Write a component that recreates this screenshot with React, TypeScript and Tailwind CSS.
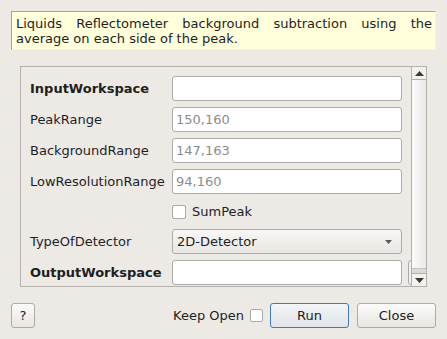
export default function App() {
  const inputBox = "h-[25px] w-[230px] shrink-0 rounded-[3px] border border-[#ababab] bg-white px-[3px] flex items-center text-[#8c8c8c]";
  return (
    <div className="w-[447px] h-[339px] bg-[#edeae6] text-[13px] text-[#1e1e1e] overflow-hidden" style={{ fontFamily: '"DejaVu Sans", sans-serif' }}>
      <div className="ml-[11px] mt-[11px] w-[425px] h-[39px] bg-[#ffffdc] border-t border-l border-[#a3a3a3] border-r border-r-[#f2f2f2] border-b border-b-[#f2f2f2] pl-[4px] pr-[3px] pt-[4px] leading-[15px] text-justify">
        Liquids Reflectometer background subtraction using the average on each side of the peak.
      </div>

      <div className="ml-[20px] mt-[16px] w-[407px] h-[221px] border border-[#b4b1ad] flex">
        <div className="flex-1 overflow-hidden pl-[9px] pt-[9px] flex flex-col gap-[6px]">
          <div className="flex items-center">
            <div className="w-[142px] shrink-0 font-bold">InputWorkspace</div>
            <div className={inputBox}></div>
          </div>
          <div className="flex items-center">
            <div className="w-[142px] shrink-0">PeakRange</div>
            <div className={inputBox}>150,160</div>
          </div>
          <div className="flex items-center">
            <div className="w-[142px] shrink-0">BackgroundRange</div>
            <div className={inputBox}>147,163</div>
          </div>
          <div className="flex items-center">
            <div className="w-[142px] shrink-0">LowResolutionRange</div>
            <div className={inputBox}>94,160</div>
          </div>
          <div className="flex items-center h-[23px]">
            <div className="w-[142px] shrink-0"></div>
            <div className="w-[14px] h-[14px] border border-[#ababab] bg-white rounded-[2px]"></div>
            <div className="ml-[6px]">SumPeak</div>
          </div>
          <div className="flex items-center">
            <div className="w-[142px] shrink-0">TypeOfDetector</div>
            <div className="h-[25px] w-[230px] shrink-0 rounded-[3px] border border-[#ababab] bg-gradient-to-b from-[#f8f7f5] to-[#e9e7e3] pl-[4px] pr-[9px] flex items-center justify-between">
              <span>2D-Detector</span>
              <svg width="7" height="4" viewBox="0 0 7 4"><path d="M0 0H7L3.5 4Z" fill="#5a5a5a" /></svg>
            </div>
          </div>
          <div className="flex items-center">
            <div className="w-[142px] shrink-0 font-bold">OutputWorkspace</div>
            <div className={inputBox}></div>
            <div className="ml-[6px] w-[20px] h-[25px] shrink-0 rounded-[3px] border border-[#ababab] bg-[#f1efec]"></div>
          </div>
        </div>
        <div className="w-[15px] shrink-0 border-l border-[#b4b1ad] flex flex-col">
          <div className="h-[13px] border-b border-[#b4b1ad] flex items-center justify-center bg-[#f4f2ef]">
            <svg width="9" height="5" viewBox="0 0 9 5"><path d="M0 5H9L4.5 0Z" fill="#3a3a3a" /></svg>
          </div>
          <div className="flex-1 bg-gradient-to-r from-[#fbfbfa] to-[#ebe9e6]"></div>
          <div className="h-[5px] bg-[#dcdad6] border-t border-[#c4c2be]"></div>
          <div className="h-[13px] border-t border-[#b4b1ad] flex items-center justify-center bg-[#f4f2ef]">
            <svg width="9" height="5" viewBox="0 0 9 5"><path d="M0 0H9L4.5 5Z" fill="#3a3a3a" /></svg>
          </div>
        </div>
      </div>

      <div className="mt-[16px] px-[11px] flex items-center">
        <button className="w-[24px] h-[25px] rounded-[3px] border border-[#ababab] bg-gradient-to-b from-[#fbfbfa] to-[#e8e6e2] text-[13px]">?</button>
        <div className="flex-1"></div>
        <span>Keep Open</span>
        <div className="ml-[6px] w-[13px] h-[13px] border border-[#ababab] bg-white rounded-[2px]"></div>
        <button className="ml-[7px] w-[79px] h-[25px] rounded-[3px] border border-[#3f7cb2] bg-gradient-to-b from-[#f3f5f7] to-[#dfe4e8]">Run</button>
        <button className="ml-[8px] w-[79px] h-[25px] rounded-[3px] border border-[#ababab] bg-gradient-to-b from-[#fbfbfa] to-[#e8e6e2]">Close</button>
      </div>
    </div>
  );
}
